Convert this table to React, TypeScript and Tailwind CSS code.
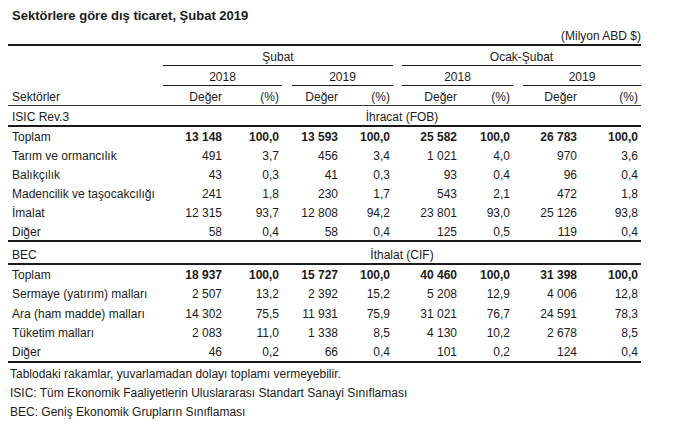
import React from "react";

type Row = { label: string; v: string[]; bold?: boolean };

const isic: Row[] = [
  { label: "Toplam", v: ["13 148", "100,0", "13 593", "100,0", "25 582", "100,0", "26 783", "100,0"], bold: true },
  { label: "Tarım ve ormancılık", v: ["491", "3,7", "456", "3,4", "1 021", "4,0", "970", "3,6"] },
  { label: "Balıkçılık", v: ["43", "0,3", "41", "0,3", "93", "0,4", "96", "0,4"] },
  { label: "Madencilik ve taşocakcılığı", v: ["241", "1,8", "230", "1,7", "543", "2,1", "472", "1,8"] },
  { label: "İmalat", v: ["12 315", "93,7", "12 808", "94,2", "23 801", "93,0", "25 126", "93,8"] },
  { label: "Diğer", v: ["58", "0,4", "58", "0,4", "125", "0,5", "119", "0,4"] },
];

const bec: Row[] = [
  { label: "Toplam", v: ["18 937", "100,0", "15 727", "100,0", "40 460", "100,0", "31 398", "100,0"], bold: true },
  { label: "Sermaye (yatırım) malları", v: ["2 507", "13,2", "2 392", "15,2", "5 208", "12,9", "4 006", "12,8"] },
  { label: "Ara (ham madde) malları", v: ["14 302", "75,5", "11 931", "75,9", "31 021", "76,7", "24 591", "78,3"] },
  { label: "Tüketim malları", v: ["2 083", "11,0", "1 338", "8,5", "4 130", "10,2", "2 678", "8,5"] },
  { label: "Diğer", v: ["46", "0,2", "66", "0,4", "101", "0,2", "124", "0,4"] },
];

// right-aligned value cells, widths measured from the right edges of the numbers
const colW = ["w-[59px]", "w-[57px]", "w-[59px]", "w-[52px]", "w-[67px]", "w-[53px]", "w-[67px]", "w-[61px]"];

function Cells({ vals, bold }: { vals: string[]; bold?: boolean }) {
  return (
    <>
      {vals.map((x, i) => (
        <div key={i} className={`${colW[i]} text-right whitespace-nowrap ${bold ? "font-bold" : ""}`}>{x}</div>
      ))}
      <div className="w-[3px]" />
    </>
  );
}

function DataRows({ rows, h }: { rows: Row[]; h: string }) {
  return (
    <>
      {rows.map((r, i) => (
        <div key={i} className={`flex items-center ${h} ${i === rows.length - 1 ? "border-b-2 border-[#1a1a1a]" : ""}`}>
          <div className="w-[155px] pl-[4px] whitespace-nowrap">{r.label}</div>
          <Cells vals={r.v} bold={r.bold} />
        </div>
      ))}
    </>
  );
}

export default function App() {
  return (
    <div className="w-[677px] h-[430px] bg-white text-[#1b1b1b] text-[12px] font-['Liberation_Sans',Arial,sans-serif] overflow-hidden">
      <div className="pl-[12px] pt-[6px] h-[26px] leading-[20px] text-[13px] font-bold">Sektörlere göre dış ticaret, Şubat 2019</div>

      <div className="ml-[8px] w-[633px]">
        <div className="h-[18px] leading-[20px] text-right">(Milyon ABD $)</div>

        <div className="border-t-2 border-[#1a1a1a]">
          {/* period row */}
          <div className="flex h-[20px]">
            <div className="w-[155px]" />
            <div className="w-[230px] h-full flex items-end justify-center pb-[1px] leading-[14px] border-b border-[#1a1a1a]">Şubat</div>
            <div className="w-[9px]" />
            <div className="w-[239px] h-full flex items-end justify-center pb-[1px] leading-[14px] border-b border-[#1a1a1a]">Ocak-Şubat</div>
          </div>

          {/* year row */}
          <div className="flex h-[20px]">
            <div className="w-[155px]" />
            <div className="w-[119px] h-full flex items-end justify-center pb-[1px] leading-[14px] border-b border-[#1a1a1a]">2018</div>
            <div className="w-[10px]" />
            <div className="w-[101px] h-full flex items-end justify-center pb-[1px] leading-[14px] border-b border-[#1a1a1a]">2019</div>
            <div className="w-[9px]" />
            <div className="w-[111px] h-full flex items-end justify-center pb-[1px] leading-[14px] border-b border-[#1a1a1a]">2018</div>
            <div className="w-[10px]" />
            <div className="w-[118px] h-full flex items-end justify-center pb-[1px] leading-[14px] border-b border-[#1a1a1a]">2019</div>
          </div>

          {/* column headers */}
          <div className="flex items-end h-[20px] pb-[1px] leading-[14px] border-b border-[#333]">
            <div className="w-[155px] pl-[4px]">Sektörler</div>
            <Cells vals={["Değer", "(%)", "Değer", "(%)", "Değer", "(%)", "Değer", "(%)"]} />
          </div>

          {/* ISIC section */}
          <div className="flex items-end h-[21px] pb-[1px] leading-[14px] border-b-2 border-[#1a1a1a]">
            <div className="w-[155px] pl-[4px]">ISIC Rev.3</div>
            <div className="w-[478px] text-center">İhracat (FOB)</div>
          </div>
          <DataRows rows={isic} h="h-[19.2px]" />

          {/* BEC section */}
          <div className="flex items-end h-[23px] pb-[1px] leading-[14px] border-b-2 border-[#1a1a1a]">
            <div className="w-[155px] pl-[4px]">BEC</div>
            <div className="w-[478px] text-center">İthalat (CIF)</div>
          </div>
          <DataRows rows={bec} h="h-[19.5px]" />
        </div>

        <div className="pt-[2px] pl-[2px] leading-[19px]">
          <p>Tablodaki rakamlar, yuvarlamadan dolayı toplamı vermeyebilir.</p>
          <p>ISIC: Tüm Ekonomik Faaliyetlerin Uluslararası Standart Sanayi Sınıflaması</p>
          <p>BEC: Geniş Ekonomik Grupların Sınıflaması</p>
        </div>
      </div>
    </div>
  );
}
